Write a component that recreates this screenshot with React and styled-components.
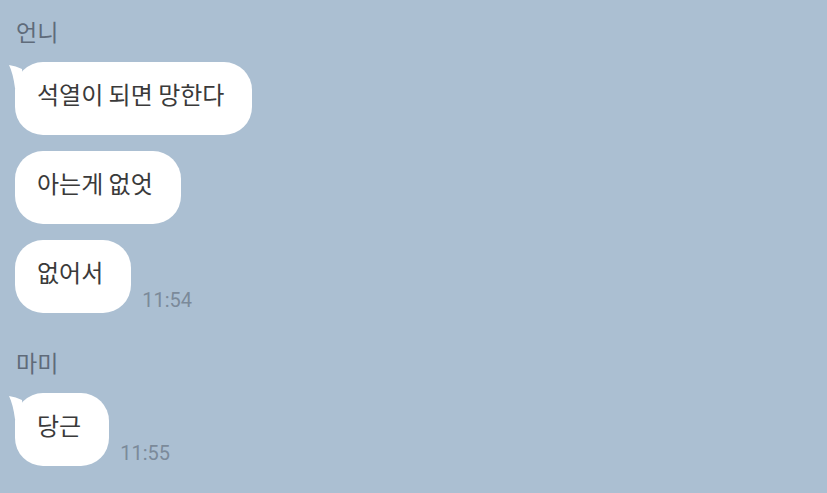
import styled, { createGlobalStyle } from "styled-components";

const GlobalStyle = createGlobalStyle`
  html, body {
    margin: 0;
    padding: 0;
    background: #abbfd2;
  }
  body {
    font-family: "Noto Sans CJK KR", "Noto Sans", sans-serif;
  }
`;

const Screen = styled.div`
  width: 827px;
  height: 493px;
  overflow: hidden;
  background: #abbfd2;
  padding: 16px 0 0 15px;
  box-sizing: border-box;
  display: flex;
  flex-direction: column;
  gap: 34px;
`;

const Group = styled.div`
  display: flex;
  flex-direction: column;
`;

const Name = styled.div`
  font-size: 23px;
  line-height: 30px;
  color: #5f6b7a;
  margin-bottom: 16px;
  padding-left: 1px;
`;

const Messages = styled.div`
  display: flex;
  flex-direction: column;
  gap: 16px;
`;

const Row = styled.div`
  display: flex;
  align-items: flex-end;
  gap: 11px;
`;

const Bubble = styled.div`
  position: relative;
  background: #ffffff;
  border-radius: 28px;
  padding: 16px 28px 25px 22px;
  font-size: 24px;
  line-height: 32px;
  color: #3a3a3a;
  white-space: nowrap;
`;

const Tail = styled.svg`
  position: absolute;
  left: -7px;
  top: 2px;
  width: 20px;
  height: 28px;
`;

const Time = styled.span`
  font-family: Roboto, "Noto Sans", sans-serif;
  font-size: 20px;
  line-height: 20px;
  color: #7b8a9a;
  padding-bottom: 3px;
`;

function Message({ text, time, first }) {
  return (
    <Row>
      <Bubble>
        {first && (
          <Tail viewBox="0 0 20 28">
            <path d="M1 1 Q8 2 14 5 L14 26 L7 24 Q5 9 1 1 Z" fill="#ffffff" />
          </Tail>
        )}
        {text}
      </Bubble>
      {time && <Time>{time}</Time>}
    </Row>
  );
}

const chats = [
  {
    name: "언니",
    messages: [
      { text: "석열이 되면 망한다" },
      { text: "아는게 없엇" },
      { text: "없어서", time: "11:54" },
    ],
  },
  {
    name: "마미",
    messages: [{ text: "당근", time: "11:55" }],
  },
];

export default function App() {
  return (
    <>
      <GlobalStyle />
      <Screen>
        {chats.map((c) => (
          <Group key={c.name}>
            <Name>{c.name}</Name>
            <Messages>
              {c.messages.map((m, i) => (
                <Message key={i} first={i === 0} text={m.text} time={m.time} />
              ))}
            </Messages>
          </Group>
        ))}
      </Screen>
    </>
  );
}
